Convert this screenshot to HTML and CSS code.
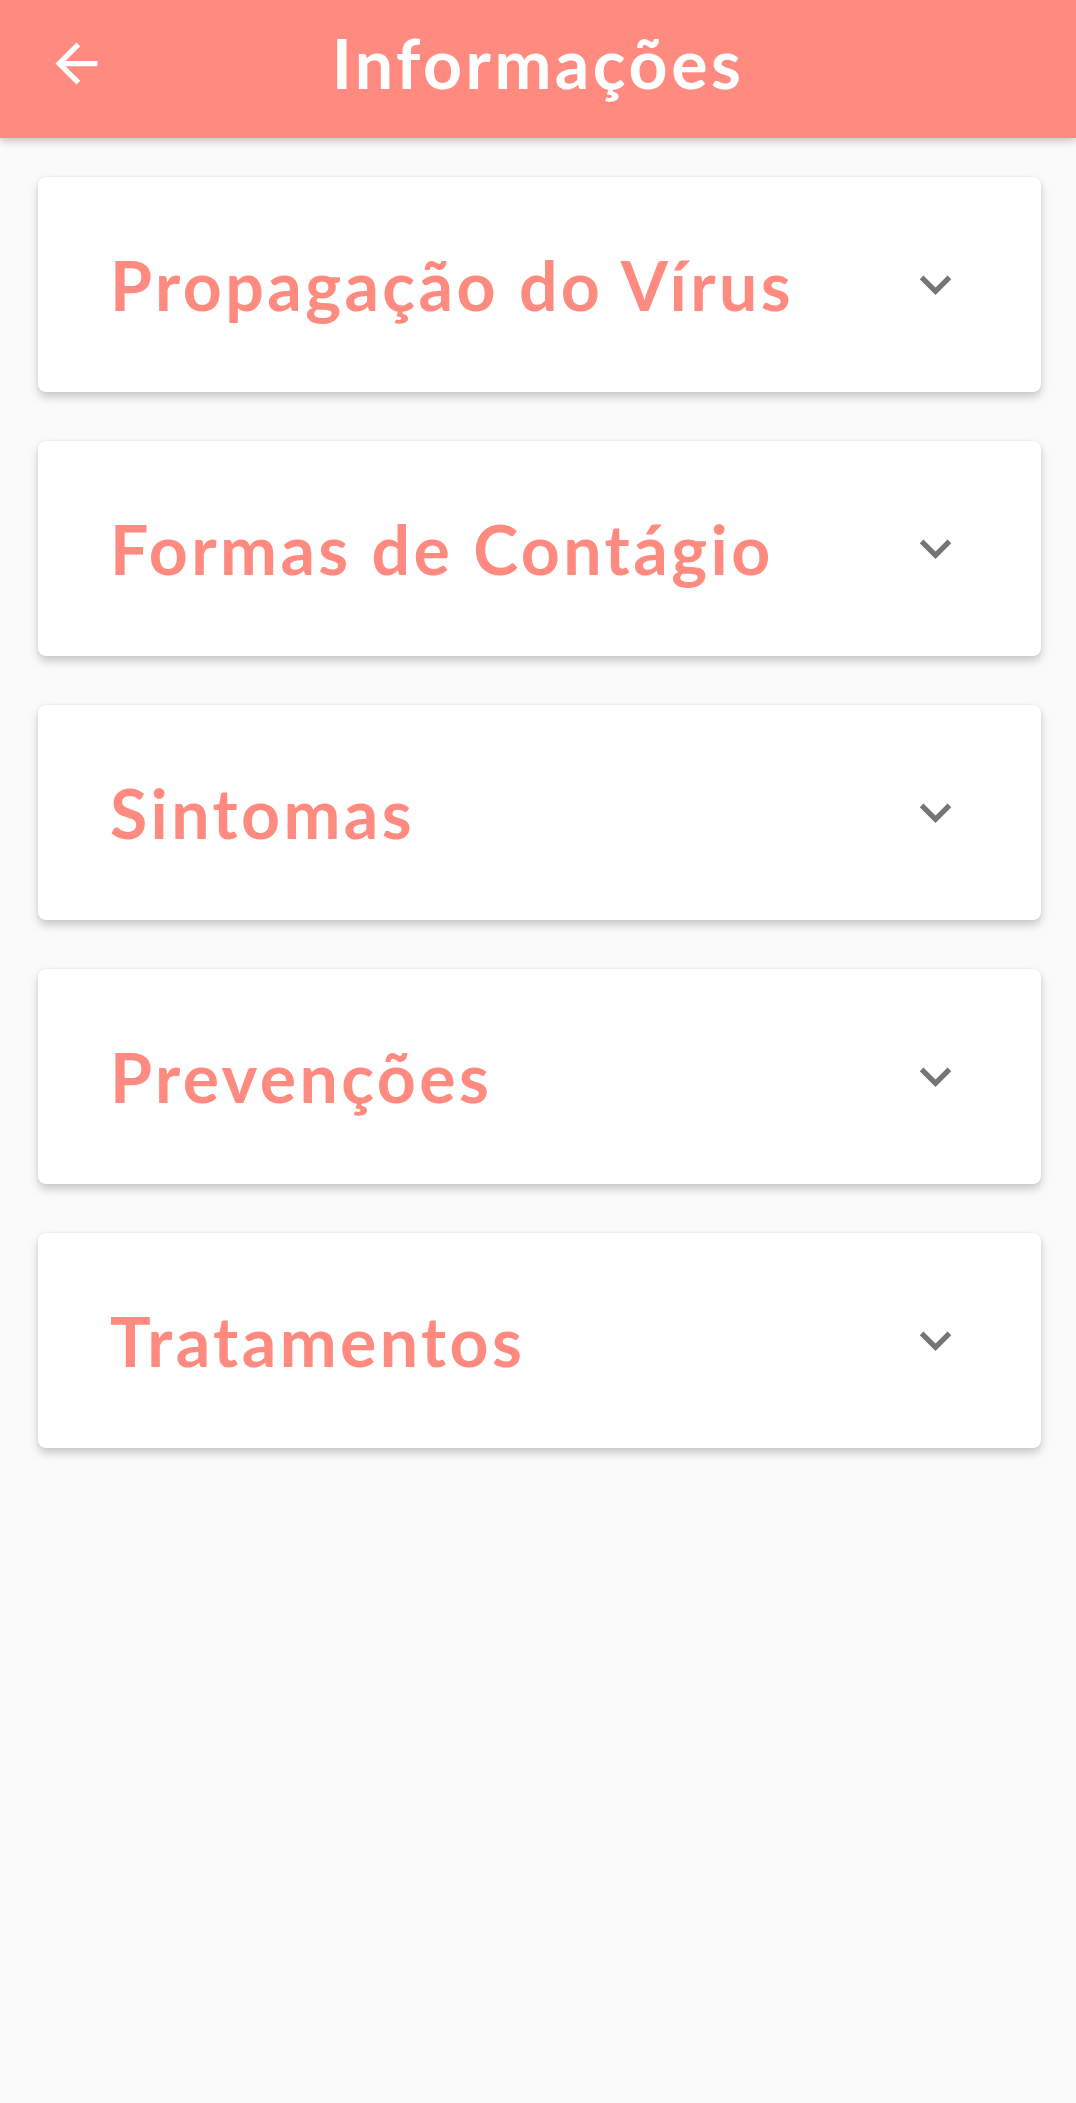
FILE: index.html
```html
<!DOCTYPE html>
<html lang="pt">
<head>
<meta charset="utf-8">
<title>Informações</title>
<link rel="stylesheet" href="styles.css">
</head>
<body>
<header class="appbar">
  <div class="appbar-left">
    <svg class="icon-back" viewBox="0 0 24 24" width="63" height="63"><path fill="#fff" d="M20 11H7.83l5.59-5.59L12 4l-8 8 8 8 1.41-1.41L7.83 13H20v-2z"/></svg>
  </div>
  <h1 class="appbar-title">Informações</h1>
  <div class="appbar-right"></div>
</header>
<main class="list">
  <section class="card"><h2 class="card-title">Propagação do Vírus</h2><svg class="chev" viewBox="0 0 24 24" width="63" height="63"><path fill="#757575" d="M16.59 8.59L12 13.17 7.41 8.59 6 10l6 6 6-6z"/></svg></section>
  <section class="card"><h2 class="card-title">Formas de Contágio</h2><svg class="chev" viewBox="0 0 24 24" width="63" height="63"><path fill="#757575" d="M16.59 8.59L12 13.17 7.41 8.59 6 10l6 6 6-6z"/></svg></section>
  <section class="card"><h2 class="card-title">Sintomas</h2><svg class="chev" viewBox="0 0 24 24" width="63" height="63"><path fill="#757575" d="M16.59 8.59L12 13.17 7.41 8.59 6 10l6 6 6-6z"/></svg></section>
  <section class="card"><h2 class="card-title">Prevenções</h2><svg class="chev" viewBox="0 0 24 24" width="63" height="63"><path fill="#757575" d="M16.59 8.59L12 13.17 7.41 8.59 6 10l6 6 6-6z"/></svg></section>
  <section class="card"><h2 class="card-title">Tratamentos</h2><svg class="chev" viewBox="0 0 24 24" width="63" height="63"><path fill="#757575" d="M16.59 8.59L12 13.17 7.41 8.59 6 10l6 6 6-6z"/></svg></section>
</main>
</body>
</html>
```
FILE: styles.css
```css
* { box-sizing: border-box; }
html, body {
  margin: 0;
  padding: 0;
  background: #fafafa;
  font-family: Lato, "Open Sans", "Liberation Sans", sans-serif;
}
.appbar {
  height: 138px;
  background: #ff8a80;
  display: grid;
  grid-template-columns: 1fr auto 1fr;
  align-items: center;
  padding-bottom: 12px;
  box-shadow: 0 3px 8px rgba(0,0,0,0.22);
  position: relative;
  z-index: 1;
}
.appbar-left {
  padding-left: 45px;
  display: flex;
  align-items: center;
}
.icon-back { display: block; }
.appbar-title {
  margin: 0;
  color: #fff;
  font-weight: 700;
  font-size: 68px;
  letter-spacing: 3.5px;
  line-height: 1;
}
.list {
  display: flex;
  flex-direction: column;
  gap: 49px;
  padding: 39px 35px 60px 38px;
}
.card {
  height: 215px;
  background: #fff;
  border-radius: 8px;
  box-shadow: 0 5px 10px rgba(0,0,0,0.2), 0 0 3px rgba(0,0,0,0.06);
  display: flex;
  align-items: center;
  justify-content: space-between;
  padding: 0 74px 0 72px;
}
.card-title {
  margin: 0;
  color: #ff8a80;
  font-weight: 700;
  font-size: 68px;
  letter-spacing: 3.4px;
  line-height: 1;
}
.chev { display: block; }
```
